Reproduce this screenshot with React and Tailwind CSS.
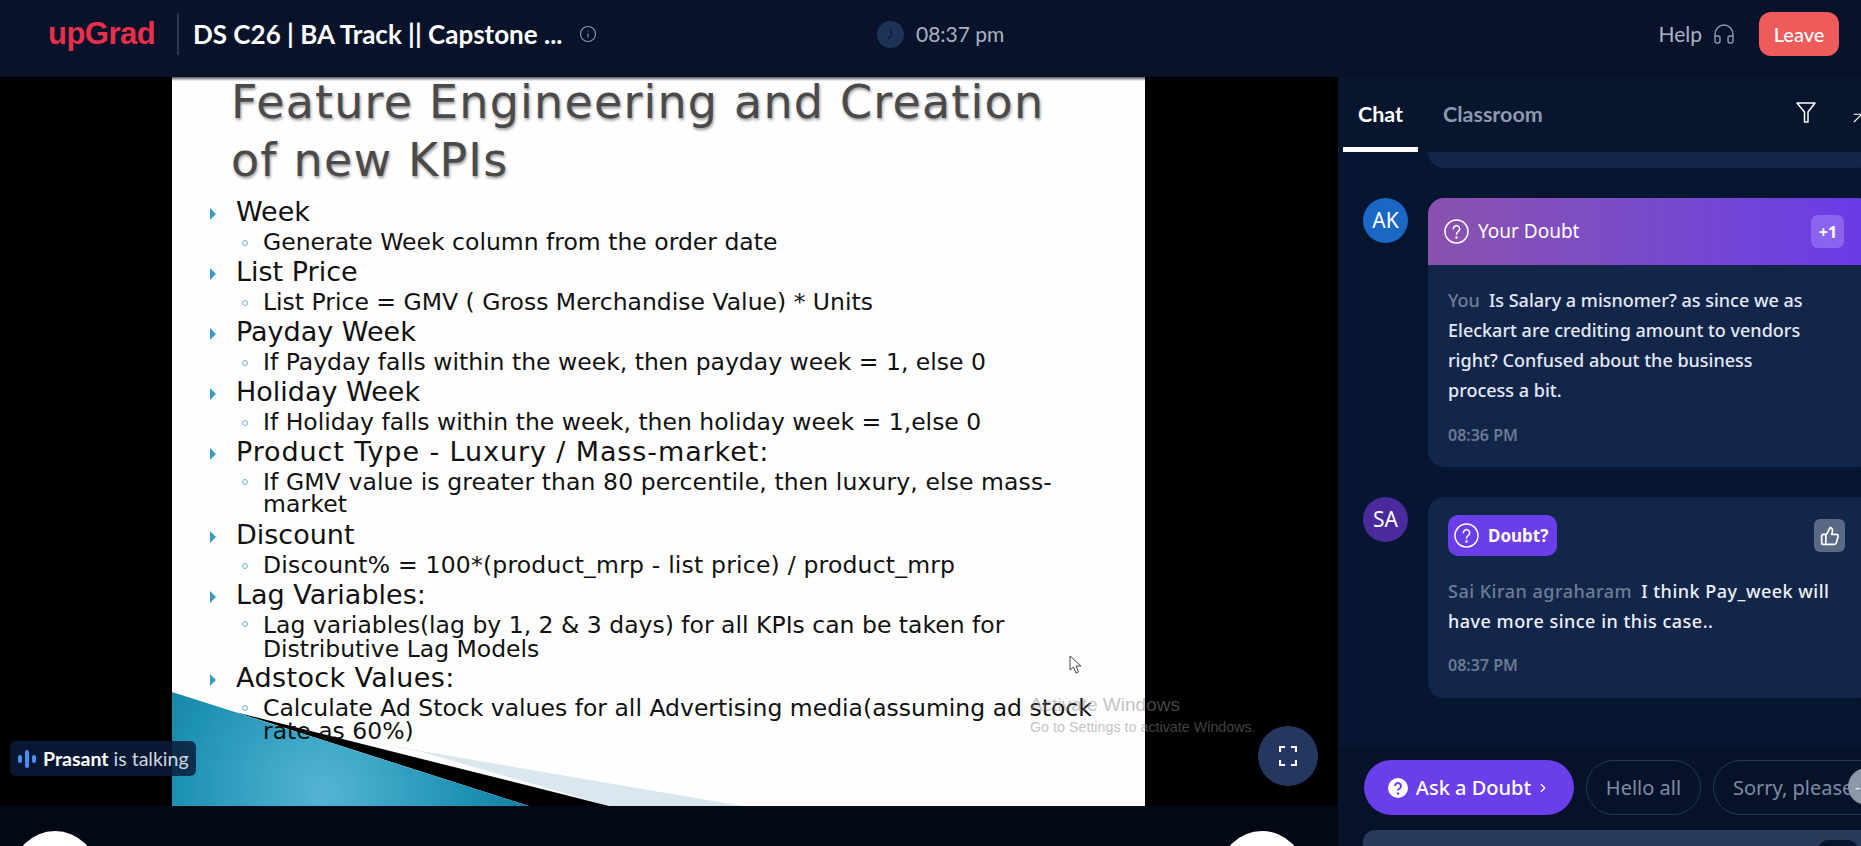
import React from "react";
import { ChevronRight, Info, Headphones, ThumbsUp, ArrowUpRight } from "lucide-react";

const sans = "font-['Lato','Noto_Sans',sans-serif]";
const body = "font-['Noto_Sans','Open_Sans',sans-serif]";

const Main = ({ children, cls = "" }) => (
  <div className={`relative h-[30px] pl-[64px] text-[27px] leading-[30px] text-[#111] ${cls}`}>
    <svg className="absolute left-[38px] top-[11px]" width="6" height="12" viewBox="0 0 6 12"><path d="M0 0 L6 6 L0 12 Z" fill="#3a9cb8" /></svg>
    {children}
  </div>
);

const Sub = ({ children, cls = "h-[30px] leading-[30px]", top = "top-[13px]" }) => (
  <div className={`relative whitespace-nowrap pl-[91px] text-[23.5px] text-[#111] ${cls}`}>
    <span className={`absolute left-[70px] ${top} h-[6px] w-[6px] rounded-full border border-[#6fb5c9]`} />
    {children}
  </div>
);

const Slide = () => (
  <div className="relative ml-[172px] h-full w-[973px] overflow-hidden bg-[#fefefe] font-['DejaVu_Sans',sans-serif]">
    <svg className="absolute inset-0" width="973" height="729" viewBox="0 0 973 729">
      <defs>
        <radialGradient id="teal" gradientUnits="userSpaceOnUse" cx="150" cy="715" r="230">
          <stop offset="0" stopColor="#55b4d4" />
          <stop offset="0.6" stopColor="#1f93b4" />
          <stop offset="1" stopColor="#0b7a98" />
        </radialGradient>
      </defs>
      <polygon points="185,663 570,729 437,729 250,675" fill="#d8e8ee" />
      <polygon points="63,635 437,729 357,729" fill="#000" />
      <polygon points="0,615 357,729 0,729" fill="url(#teal)" />
    </svg>
    <div className="absolute left-0 right-0 top-0 h-[4px] bg-gradient-to-b from-[#555] to-transparent" />
    <div className="relative">
      <div className="pl-[59px] text-[46px] tracking-[1.2px] text-[#4a4a4a] [text-shadow:1px_2px_3px_#9a9a9a]">
        <div className="h-[50px] leading-[50px]">Feature Engineering and Creation</div>
        <div className="mt-[8px] h-[50px] leading-[50px]">of new KPIs</div>
      </div>
      <div className="mt-[12px]">
        <Main>Week</Main>
        <Sub>Generate Week column from the order date</Sub>
        <Main>List Price</Main>
        <Sub>List Price = GMV ( Gross Merchandise Value) * Units</Sub>
        <Main>Payday Week</Main>
        <Sub>If Payday falls within the week, then payday week = 1, else 0</Sub>
        <Main>Holiday Week</Main>
        <Sub>If Holiday falls within the week, then holiday week = 1,else 0</Sub>
        <Main cls="tracking-[0.9px]">Product Type - Luxury / Mass-market:</Main>
        <Sub cls="pb-[5px] pt-1 leading-[22px] tracking-[0.1px]" top="top-[12px]">If GMV value is greater than 80 percentile, then luxury, else mass-<br />market</Sub>
        <Main>Discount</Main>
        <Sub cls="h-[30px] leading-[30px] tracking-[0.2px]">Discount% = 100*(product_mrp - list price) / product_mrp</Sub>
        <Main>Lag Variables:</Main>
        <Sub cls="pb-[2px] pt-[3px] leading-[24px]" top="top-[11px]">Lag variables(lag by 1, 2 &amp; 3 days) for all KPIs can be taken for<br />Distributive Lag Models</Sub>
        <Main cls="tracking-[0.4px]">Adstock Values:</Main>
        <Sub cls="pt-[4px] leading-[23px]" top="top-[12px]">Calculate Ad Stock values for all Advertising media(assuming ad stock<br />rate as 60%)</Sub>
      </div>
    </div>
  </div>
);

const Header = () => (
  <header className={`flex h-[77px] shrink-0 items-center bg-[#08132b] pb-[9px] ${sans}`}>
    <div className="ml-[48px] w-[129px] font-['Liberation_Sans',sans-serif] text-[31px] font-bold leading-[36px] tracking-[-0.5px] text-[#e8304a]">upGrad</div>
    <div className="h-[42px] w-[2px] bg-[#2a3754]" />
    <div className="ml-[14px] w-[367px] whitespace-nowrap text-[26px] font-bold text-white">DS C26 | BA Track || Capstone ...</div>
    <Info className="ml-[19px] text-[#8f9ab0]" size={18} strokeWidth={1.5} />
    <div className="ml-[280px] flex items-center">
      <svg width="27" height="27" viewBox="0 0 27 27">
        <circle cx="13.5" cy="13.5" r="13.5" fill="#1e3358" />
        <path d="M14 7 V15 L11 18" fill="none" stroke="#0a1630" strokeWidth="1.2" />
      </svg>
      <span className="ml-[12px] text-[21px] text-[#a9b2c2]">08:37 pm</span>
    </div>
    <div className="ml-auto flex items-center">
      <span className="text-[21px] text-[#a9b2c2]">Help</span>
      <Headphones className="ml-[10px] text-[#8f9ab0]" size={24} strokeWidth={1.4} />
      <button className="ml-[23px] mr-[22px] h-[44px] w-[80px] rounded-[12px] bg-[#ee5b5b] text-[20px] font-medium text-white">Leave</button>
    </div>
  </header>
);

const QMark = ({ size = 25 }) => (
  <svg width={size} height={size} viewBox="0 0 25 25" fill="none" stroke="#fff" strokeWidth="1.5" strokeLinecap="round">
    <circle cx="12.5" cy="12.5" r="11.5" />
    <path d="M9.3 9.8a3.2 3.2 0 1 1 4.8 2.8c-1 .6-1.6 1.2-1.6 2.6" />
    <circle cx="12.5" cy="18.6" r="0.5" fill="#fff" />
  </svg>
);

const Avatar = ({ children, cls }) => (
  <div className={`flex h-[45px] w-[45px] shrink-0 items-center justify-center rounded-full text-[21px] text-white ${cls}`}>{children}</div>
);

const Time = ({ children }) => <div className="text-[16px] font-semibold leading-[20px] text-[#6b7a92]">{children}</div>;

const Sidebar = () => (
  <aside className={`flex w-[523px] shrink-0 flex-col overflow-hidden bg-[#061631] ${body}`}>
    <div className={`relative flex h-[75px] shrink-0 bg-[#07152f] ${sans}`}>
      <div className="ml-[5px] flex w-[75px] flex-col items-center justify-between">
        <span className="mt-[24px] text-[21.5px] font-bold leading-[26px] text-white">Chat</span>
        <span className="h-[5px] w-full bg-white" />
      </div>
      <span className="ml-[25px] mt-[24px] text-[21.5px] font-bold leading-[26px] text-[#8d99ad]">Classroom</span>
      <svg className="absolute left-[458px] top-[25px]" width="20" height="22" viewBox="0 0 20 22" fill="none" stroke="#fff" strokeWidth="1.5" strokeLinejoin="round">
        <path d="M1 1 H19 L12 10 V20 H8.5 V10 Z" />
      </svg>
      <ArrowUpRight className="absolute left-[511px] top-[32px] text-white" size={18} strokeWidth={1.5} />
    </div>
    <div className="flex min-h-0 flex-1 flex-col">
      <div className="ml-[90px] h-[16px] w-[445px] shrink-0 rounded-b-[16px] bg-[#12264a]" />
      <div className="ml-[25px] mt-[30px] flex gap-[20px]">
        <Avatar cls="bg-[#1a68c4]">AK</Avatar>
        <div className="w-[445px] shrink-0 overflow-hidden rounded-[16px] bg-[#12264a]">
          <div className="flex h-[67px] items-center bg-gradient-to-r from-[#8a52ad] to-[#683ae8] pl-[16px]">
            <QMark />
            <span className="ml-[9px] text-[19px] text-white">Your Doubt</span>
            <span className="ml-[232px] flex h-[33px] w-[33px] items-center justify-center rounded-[7px] bg-[#8a63ee] text-[16px] font-bold text-white">+1</span>
          </div>
          <div className="pb-[22px] pl-[20px] pt-[20px]">
            <p className="w-[410px] text-[18px] font-medium leading-[30px] text-[#e4e9f5]">
              <span className="mr-[9px] text-[#6f7d95]">You</span>Is Salary a misnomer? as since we as<br />Eleckart are crediting amount to vendors<br />right? Confused about the business<br />process a bit.
            </p>
            <div className="mt-[20px]"><Time>08:36 PM</Time></div>
          </div>
        </div>
      </div>
      <div className="ml-[25px] mt-[30px] flex gap-[20px]">
        <Avatar cls="bg-[#4a2a9c]">SA</Avatar>
        <div className="h-[201px] w-[445px] shrink-0 rounded-[16px] bg-[#12264a] pl-[20px] pt-[18px]">
          <div className="flex items-center">
            <div className="flex h-[41px] w-[109px] items-center rounded-[10px] bg-[#6a3ee8] pl-[6px]">
              <QMark />
              <span className="ml-[9px] text-[17px] font-bold text-white">Doubt?</span>
            </div>
            <div className="ml-[257px] flex h-[33px] w-[31px] items-center justify-center rounded-[6px] bg-[#5a6a85]">
              <ThumbsUp className="text-white" size={20} strokeWidth={2} />
            </div>
          </div>
          <p className="mt-[20px] whitespace-nowrap text-[18px] font-medium leading-[30px] tracking-[0.5px] text-[#eef1f8]">
            <span className="mr-[9px] text-[#6f7d95]">Sai Kiran agraharam</span>I think Pay_week will<br />have more since in this case..
          </p>
          <div className="mt-[19px]"><Time>08:37 PM</Time></div>
        </div>
      </div>
    </div>
    <div className="relative h-[99px] shrink-0 bg-[#05122a]">
      <div className="ml-[26px] mt-[13px] flex gap-[12px] text-[20px]">
        <button className="flex h-[55px] w-[210px] shrink-0 items-center justify-center rounded-full bg-[#6a3ee8] font-medium text-white">
          <svg width="20" height="20" viewBox="0 0 20 20" className="mr-[8px]">
            <circle cx="10" cy="10" r="10" fill="#fff" />
            <path d="M7 8a3 3 0 1 1 4.6 2.5c-1 .6-1.6 1-1.6 2" fill="none" stroke="#6a3ee8" strokeWidth="2" />
            <circle cx="10" cy="15.5" r="1.2" fill="#6a3ee8" />
          </svg>
          Ask a Doubt
          <ChevronRight className="ml-[5px]" size={14} />
        </button>
        <span className="flex h-[55px] w-[115px] shrink-0 items-center justify-center rounded-full border border-[#26375a] text-[#7f8ca3]">Hello all</span>
        <span className="flex h-[55px] w-[200px] shrink-0 items-center whitespace-nowrap rounded-full border border-[#26375a] pl-[19px] text-[#7f8ca3]">Sorry, please</span>
      </div>
      <span className="absolute left-[510px] top-[21px] flex h-[37px] w-[37px] items-center rounded-full bg-[#8c97a8] pl-[7px] text-[#e8ecf2]">-</span>
      <div className="ml-[25px] mt-[15px] h-[40px] w-[520px] rounded-[12px] bg-[#2a3a5a]" />
      <div className="absolute left-[480px] top-[93px] h-[30px] w-[40px] rounded-[10px] bg-[#07152f]" />
    </div>
  </aside>
);

export default function App() {
  return (
    <div className="flex h-screen w-full flex-col overflow-hidden bg-[#020816]">
      <Header />
      <div className="flex min-h-0 flex-1">
        <div className="relative flex w-[1338px] shrink-0 flex-col">
          <div className="h-[729px] shrink-0 bg-black">
            <Slide />
          </div>
          <div className="flex flex-1 justify-between overflow-hidden bg-[#020816] pl-[13px] pr-[34px] pt-[25px]">
            <div className="h-[84px] w-[84px] shrink-0 rounded-full bg-white" />
            <div className="h-[84px] w-[84px] shrink-0 rounded-full bg-white" />
          </div>

          <div className={`absolute left-[10px] top-[664px] flex h-[35px] w-[186px] items-center rounded-[6px] bg-[#0a1c3bd9] pl-[7px] text-[19.5px] text-[#cfd6e2] ${sans}`}>
            <svg width="20" height="20" viewBox="0 0 20 20" className="mr-[6px]">
              <rect x="1" y="6" width="4" height="8" rx="2" fill="#4d8df5" />
              <rect x="8" y="1" width="4" height="18" rx="2" fill="#4d8df5" />
              <rect x="15" y="6" width="4" height="8" rx="2" fill="#4d8df5" />
            </svg>
            <b className="mr-[5px] text-white">Prasant</b>is talking
          </div>

          <svg className="absolute left-[1069px] top-[578px]" width="14" height="20" viewBox="0 0 14 20" fill="#fff" stroke="#444" strokeWidth="1">
            <path d="M1 1 V15 L4.5 12 L7 18 L9.5 17 L7 11 L12 11 Z" />
          </svg>

          <div className="absolute left-[1030px] top-[616px] font-['Liberation_Sans',sans-serif] text-[#88888880]">
            <div className="text-[19px] leading-[24px]">Activate Windows</div>
            <div className="text-[14.3px] leading-[20px]">Go to Settings to activate Windows.</div>
          </div>

          <button className="absolute left-[1258px] top-[649px] flex h-[60px] w-[60px] items-center justify-center rounded-full bg-[#25375f]">
            <svg width="18" height="20" viewBox="0 0 18 20" fill="none" stroke="#fff" strokeWidth="2.2">
              <path d="M1 6 V1 H6 M12 1 H17 V6 M17 14 V19 H12 M6 19 H1 V14" />
            </svg>
          </button>
        </div>
        <Sidebar />
      </div>
    </div>
  );
}
